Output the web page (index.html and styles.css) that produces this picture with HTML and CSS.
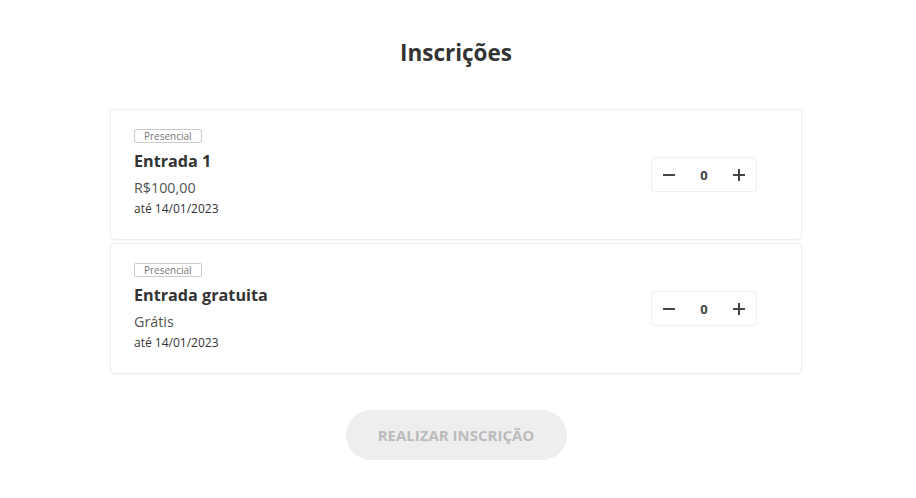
FILE: index.html
```html
<!DOCTYPE html>
<html lang="pt-BR">
<head>
    <meta charset="UTF-8">
    <meta name="viewport" content="width=device-width, initial-scale=1.0">
    <title>Inscrições</title>
    <link rel="stylesheet" href="styles.css">
</head>
<body>
    <div class="container">
        <h1 class="title">Inscrições</h1>

        <div class="ticket-list">
            <div class="ticket">
                <div class="ticket-info">
                    <span class="badge">Presencial</span>
                    <div class="ticket-name">Entrada 1</div>
                    <div class="ticket-price">R$100,00</div>
                    <div class="ticket-date">até 14/01/2023</div>
                </div>
                <div class="counter">
                    <button class="counter-btn" aria-label="Diminuir">
                        <svg width="12" height="12" viewBox="0 0 12 12"><rect x="0" y="5" width="12" height="2" fill="#444"/></svg>
                    </button>
                    <span class="counter-value">0</span>
                    <button class="counter-btn" aria-label="Aumentar">
                        <svg width="12" height="12" viewBox="0 0 12 12"><rect x="0" y="5" width="12" height="2" fill="#444"/><rect x="5" y="0" width="2" height="12" fill="#444"/></svg>
                    </button>
                </div>
            </div>

            <div class="ticket">
                <div class="ticket-info">
                    <span class="badge">Presencial</span>
                    <div class="ticket-name">Entrada gratuita</div>
                    <div class="ticket-price">Grátis</div>
                    <div class="ticket-date">até 14/01/2023</div>
                </div>
                <div class="counter">
                    <button class="counter-btn" aria-label="Diminuir">
                        <svg width="12" height="12" viewBox="0 0 12 12"><rect x="0" y="5" width="12" height="2" fill="#444"/></svg>
                    </button>
                    <span class="counter-value">0</span>
                    <button class="counter-btn" aria-label="Aumentar">
                        <svg width="12" height="12" viewBox="0 0 12 12"><rect x="0" y="5" width="12" height="2" fill="#444"/><rect x="5" y="0" width="2" height="12" fill="#444"/></svg>
                    </button>
                </div>
            </div>
        </div>

        <div class="actions">
            <button class="submit" disabled>Realizar inscrição</button>
        </div>
    </div>
</body>
</html>
```

FILE: styles.css
```css
body {
    font-family: "Open Sans", Arial, sans-serif;
    background-color: #ffffff;
    color: #333333;
    margin: 0;
    padding: 0 4px 0 0;
}

.container {
    width: 692px;
    margin: 0 auto;
    padding-top: 37px;
}

.title {
    font-size: 22.5px;
    line-height: 32px;
    font-weight: bold;
    text-align: center;
    margin: 0 0 40px;
    color: #333333;
}

.ticket-list {
    display: flex;
    flex-direction: column;
    gap: 3px;
}

.ticket {
    display: flex;
    align-items: center;
    justify-content: space-between;
    padding: 19px 44px 22px 23px;
    border: 1px solid #ececec;
    border-radius: 4px;
    box-shadow: 0 1px 2px rgba(0, 0, 0, 0.04);
}

.ticket-info {
    display: flex;
    flex-direction: column;
    align-items: flex-start;
}

.badge {
    font-size: 10px;
    line-height: 12px;
    color: #777777;
    border: 1px solid #cccccc;
    border-radius: 2px;
    padding: 0 9px;
}

.ticket-name {
    font-size: 16.2px;
    line-height: 22px;
    font-weight: bold;
    margin-top: 7px;
    color: #333333;
}

.ticket-price {
    font-size: 14.3px;
    line-height: 20px;
    margin-top: 6px;
    color: #555555;
}

.ticket-date {
    font-size: 12px;
    line-height: 16px;
    margin-top: 3px;
    color: #333333;
}

.counter {
    display: flex;
    align-items: center;
    width: 104px;
    height: 33px;
    margin-top: 3px;
    border: 1px solid #eeeeee;
    border-radius: 4px;
}

.counter-btn {
    width: 34px;
    height: 33px;
    border: none;
    background: none;
    padding: 0;
    display: flex;
    align-items: center;
    justify-content: center;
    cursor: pointer;
}

.counter-value {
    flex: 1;
    text-align: center;
    font-size: 13px;
    font-weight: bold;
    color: #444444;
}

.actions {
    margin-top: 36px;
    text-align: center;
}

.submit {
    font-family: "Open Sans", Arial, sans-serif;
    width: 221px;
    height: 50px;
    border: none;
    border-radius: 25px;
    background-color: #eeeeee;
    color: #bbbbbb;
    font-size: 15px;
    font-weight: bold;
    text-transform: uppercase;
}
```
